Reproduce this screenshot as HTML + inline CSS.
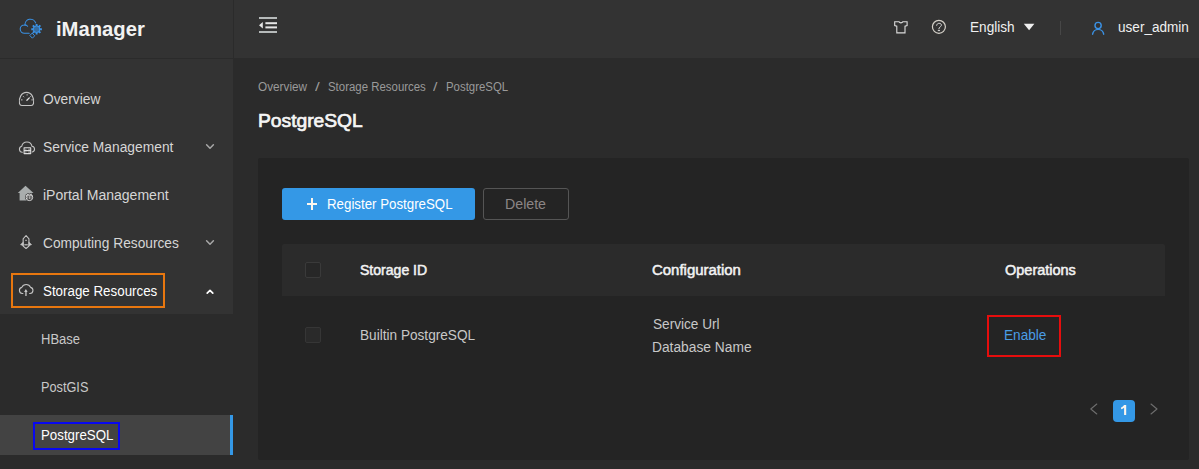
<!DOCTYPE html>
<html><head><meta charset="utf-8">
<style>
*{box-sizing:border-box;margin:0;padding:0}
html,body{width:1199px;height:469px;overflow:hidden;background:#2b2b2b;font-family:"Liberation Sans",sans-serif}
.a{position:absolute}
.t{position:absolute;white-space:nowrap;line-height:1;transform-origin:0 0;font-family:"Liberation Sans",sans-serif}
svg{position:absolute;overflow:visible}
</style></head><body>
<!-- sidebar + header -->
<div class="a" style="left:0;top:0;width:233px;height:469px;background:#333333"></div>
<div class="a" style="left:234px;top:0;width:965px;height:58px;background:#333333"></div>
<div class="a" style="left:0;top:58px;width:233px;height:1px;background:#2b2b2b"></div>
<div class="a" style="left:0;top:314px;width:233px;height:155px;background:#2b2b2b"></div>
<div class="a" style="left:0;top:415px;width:233px;height:40px;background:#434343"></div>
<div class="a" style="left:230px;top:415px;width:3px;height:40px;background:#3498e6"></div>
<div class="a" style="left:11px;top:273px;width:154px;height:35px;border:2px solid #e8770f"></div>
<div class="a" style="left:33px;top:422px;width:87px;height:28px;border:2px solid #0808f0"></div>

<!-- logo icon -->
<svg style="left:0;top:0" width="60" height="58" viewBox="0 0 60 58" fill="none" stroke="#3a92e6" stroke-width="1.05" stroke-linecap="round" stroke-linejoin="round">
<path d="M29.2 33.3H24.4a4.200 4.200 0 0 1 0-8.400c1.400-.1 2.500.4 3.200 1.400"/>
<path d="M25.050 25.400A5.500 5.500 0 0 1 35.700 22.900"/>
<circle cx="36.600" cy="29.200" r="3.500" fill="#3a92e6" fill-opacity=".6" stroke="none"/>
<path d="M36.600 23.900v2.200M36.600 32.300v2.200M31.300 29.200h2.200M39.700 29.200h2.200M32.850 25.450l1.550 1.550M38.800 31.400l1.550 1.550M32.850 32.950l1.550-1.550M38.800 27l1.550-1.550" stroke-width="1.900" stroke-linecap="butt"/>
<circle cx="36.600" cy="29.200" r="3.300" stroke-width="1" />
<path d="M32.400 33.400l2.300 2.400-2.300 2.400-2.300-2.400z" stroke-width="1"/>
</svg>

<!-- menu icons -->
<svg style="left:0;top:0" width="60" height="300" viewBox="0 0 60 300" fill="none" stroke="#c4c4c4" stroke-width="1.1" stroke-linecap="round" stroke-linejoin="round">
<!-- overview gauge -->
<path d="M21.800 105.500H31.200Q33 105.500 33.500 103.500C34.600 98 31.500 92.400 26.500 92.400C21.500 92.400 18.400 98 19.500 103.500Q20 105.500 21.800 105.500Z"/>
<path d="M26.900 100.300L29.300 97.900" stroke="#e0e0e0" stroke-width="1.300"/>
<path d="M27.100 94.600v.5M23.400 96.500l.4.400M30.700 96.500l-.4.400M21.400 99.900h.7M31.800 99.900h.7" stroke-width="1"/>
<!-- service: cloud + server -->
<path d="M22.300 152.300a3.100 3.100 0 0 1-.5-6.100A5.200 5.200 0 0 1 32 146.300a2.900 2.900 0 0 1 .3 5.700"/>
<path d="M24.100 147.700h6.600v5.900h-6.600zM24.100 150.600h6.600" stroke="#dcdcdc" stroke-width="1.100"/>
<path d="M25.800 149.200h.1M25.800 152.100h.1M28.800 149.200h.6M28.800 152.100h.6" stroke="#dcdcdc" stroke-width=".9"/>
<!-- rocket -->
<path d="M26.050 235.500L28.950 238.800V246.100L26.050 248.500L23.150 246.100V238.800Z"/>
<path d="M23.100 242.300L20.500 244.600L23.100 245.700ZM29 242.300L31.600 244.600L29 245.700Z" fill="#c4c4c4" stroke-width=".6"/>
<rect x="24.300" y="244.200" width="3.500" height="1.200" fill="#c4c4c4" stroke="none"/>
<path d="M25.600 240.300h.9" stroke-width="1"/>
<!-- storage: cloud upload -->
<path d="M22.900 293.500h-.6a3.100 3.100 0 0 1-.5-6.100A4.800 4.800 0 0 1 30.600 287.400a3.100 3.100 0 0 1-.5 6.100h-.5" stroke="#c4c4c4"/>
<path d="M25.900 289.100l1.700 2.800h-3.400z" fill="#d4d4d4" stroke="none"/>
<rect x="25.200" y="291.500" width="1.500" height="4.500" fill="#b4b4b4" stroke="none"/>
</svg>
<!-- iportal house (filled) -->
<svg style="left:0;top:0" width="60" height="300" viewBox="0 0 60 300">
<path d="M25.500 185.700l8 7.300h-1.800v7.600H19.600v-7.600h-1.800z" fill="#a9adad"/>
<circle cx="29.400" cy="197.300" r="4.300" fill="#333333"/>
<circle cx="29.400" cy="197.300" r="3.300" fill="none" stroke="#d8d8d8" stroke-width="1"/>
<path d="M26.600 195.600h5.600M27.800 196.200v2.600M29.400 196.200v3M31 196.200v2.600" stroke="#d8d8d8" stroke-width=".8" fill="none"/>
</svg>
<!-- chevrons -->
<svg style="left:0;top:0" width="233" height="300" viewBox="0 0 233 300" fill="none" stroke-linecap="round" stroke-linejoin="round">
<path d="M206.600 144.800l3.400 3.400 3.400-3.400" stroke="#a8a8a8" stroke-width="1.500"/>
<path d="M206.600 240.800l3.400 3.400 3.400-3.400" stroke="#a8a8a8" stroke-width="1.500"/>
<path d="M207.200 293.200l2.800-2.800 2.800 2.800" stroke="#ffffff" stroke-width="1.700"/>
</svg>

<!-- header icons -->
<svg style="left:234px;top:0" width="965" height="58" viewBox="234 0 965 58" fill="none" stroke-linecap="round" stroke-linejoin="round">
<rect x="259" y="17" width="18" height="2" fill="#b6baba"/>
<rect x="259" y="31" width="18" height="2" fill="#b6baba"/>
<rect x="265.400" y="22.200" width="11.600" height="2" fill="#e6e6e6"/>
<rect x="265.400" y="26.400" width="11.600" height="2" fill="#e6e6e6"/>
<path d="M259 25.200l3.800-3.200v6.400z" fill="#e6e6e6"/>
<!-- shirt -->
<path d="M894.700 21.800h4.300c.600 1.400 3.200 1.400 3.800 0h4.300v3.800l-2.100.500v6.800h-8.200v-6.800l-2.100-.500z" stroke="#dcdcdc" stroke-width="1.100" stroke-linejoin="miter"/>
<!-- help -->
<circle cx="938.900" cy="26.800" r="6.500" stroke="#d4d0c8" stroke-width="1.200"/>
<path d="M936.700 25.300c.300-1.500 1.300-2 2.400-2 1.300 0 2.300.700 2.300 1.800 0 1-.900 1.500-1.600 2.100-.600.500-.900.900-.900 1.700" stroke="#dcdcdc" stroke-width="1"/>
<path d="M938.200 30.600h1.400" stroke="#dcdcdc" stroke-width="1"/>
<!-- caret -->
<path d="M1023.800 23.800h10.600l-5.300 6.400z" fill="#f0f0f0"/>
<!-- divider -->
<rect x="1060" y="21" width="1" height="14" fill="#474747"/>
<!-- user -->
<circle cx="1098.100" cy="25.500" r="3.100" stroke="#3a92e6" stroke-width="1.400"/>
<path d="M1092.600 34.200a5.600 5.600 0 0 1 11.100 0" stroke="#3a92e6" stroke-width="1.400"/>
</svg>

<!-- card -->
<div class="a" style="left:258px;top:158px;width:931px;height:302px;background:#242424;border-radius:2px"></div>
<div class="a" style="left:282px;top:188px;width:193px;height:32px;background:#3498e6;border-radius:3px"></div>
<div class="a" style="left:307px;top:203px;width:10px;height:2px;background:#fbf6ee"></div>
<div class="a" style="left:311px;top:198px;width:2px;height:12px;background:#fbf6ee"></div>
<div class="a" style="left:483px;top:188px;width:86px;height:32px;border:1px solid #555;border-radius:3px"></div>
<div class="a" style="left:282px;top:244px;width:883px;height:52px;background:#2b2b2b;border-radius:2px 2px 0 0"></div>
<div class="a" style="left:305px;top:262px;width:16px;height:16px;background:#272727;border:1px solid #3a3a3a;border-radius:2px"></div>
<div class="a" style="left:305px;top:327px;width:16px;height:16px;background:#2a2a2a;border:1px solid #363636;border-radius:2px"></div>
<div class="a" style="left:987px;top:315px;width:74px;height:42px;border:2px solid #e60d0d"></div>
<div class="a" style="left:1113px;top:400px;width:22px;height:22px;background:#3498e6;border-radius:4px"></div>
<svg style="left:1080px;top:395px" width="90" height="30" viewBox="1080 395 90 30" fill="none" stroke="#6e6e6e" stroke-width="1.100" stroke-linecap="round" stroke-linejoin="round">
<path d="M1096.800 404l-6 5 6 5"/><path d="M1151 404l6 5-6 5"/><path d="M1124.100 405h2.100v10h-2.100v-7.300c-.900.800-1.900 1.300-3 1.600v-1.800c1.300-.500 2.300-1.400 3-2.500z" fill="#fbf6ee" stroke="none"/>
</svg>

<div class="t" style="left:55.74px;top:19.07px;font-size:20px;font-weight:bold;color:#f2f2f2;transform:scaleX(1.011);">iManager</div>
<div class="t" style="left:43.26px;top:92.15px;font-size:14px;font-weight:normal;color:#d6d6d6;transform:scaleX(0.9843);">Overview</div>
<div class="t" style="left:43.26px;top:140.15px;font-size:14px;font-weight:normal;color:#d6d6d6;transform:scaleX(0.9856);">Service Management</div>
<div class="t" style="left:43.4px;top:188.15px;font-size:14px;font-weight:normal;color:#d6d6d6;transform:scaleX(1.0028);">iPortal Management</div>
<div class="t" style="left:43.26px;top:236.15px;font-size:14px;font-weight:normal;color:#d6d6d6;transform:scaleX(0.9807);">Computing Resources</div>
<div class="t" style="left:43.28px;top:284.15px;font-size:14px;font-weight:normal;color:#ffffff;transform:scaleX(0.9536);">Storage Resources</div>
<div class="t" style="left:41.47px;top:332.15px;font-size:14px;font-weight:normal;color:#c8c8c8;transform:scaleX(0.9284);">HBase</div>
<div class="t" style="left:41.49px;top:380.15px;font-size:14px;font-weight:normal;color:#c8c8c8;transform:scaleX(0.9089);">PostGIS</div>
<div class="t" style="left:41.45px;top:428.15px;font-size:14px;font-weight:normal;color:#ffffff;transform:scaleX(0.9498);">PostgreSQL</div>
<div class="t" style="left:969.83px;top:20.15px;font-size:14px;font-weight:normal;color:#f0f0f0;transform:scaleX(0.9727);">English</div>
<div class="t" style="left:1118.47px;top:20.15px;font-size:14px;font-weight:normal;color:#f0f0f0;transform:scaleX(0.9692);">user_admin</div>
<div class="t" style="left:257.71px;top:81.34px;font-size:12px;font-weight:normal;color:#9a9a9a;transform:scaleX(0.9818);">Overview</div>
<div class="t" style="left:315.4px;top:81.34px;font-size:12px;font-weight:normal;color:#9a9a9a;transform:scaleX(1.4154);">/</div>
<div class="t" style="left:327.82px;top:81.34px;font-size:12px;font-weight:normal;color:#9a9a9a;transform:scaleX(0.9523);">Storage Resources</div>
<div class="t" style="left:433.4px;top:81.34px;font-size:12px;font-weight:normal;color:#9a9a9a;transform:scaleX(1.3231);">/</div>
<div class="t" style="left:446.45px;top:81.34px;font-size:12px;font-weight:normal;color:#9a9a9a;transform:scaleX(0.95);">PostgreSQL</div>
<div class="t" style="left:257.6px;top:112.04px;font-size:18.5px;font-weight:normal;color:#f5f5f5;transform:scaleX(1.0398);-webkit-text-stroke:0.7px #f5f5f5;">PostgreSQL</div>
<div class="t" style="left:326.95px;top:197.35px;font-size:14px;font-weight:normal;color:#ffffff;transform:scaleX(0.9491);">Register PostgreSQL</div>
<div class="t" style="left:505.19px;top:197.35px;font-size:14px;font-weight:normal;color:#8c8686;transform:scaleX(1.0128);">Delete</div>
<div class="t" style="left:359.85px;top:263.35px;font-size:14px;font-weight:normal;color:#f2f2f2;transform:scaleX(1.0038);-webkit-text-stroke:0.5px #f2f2f2;">Storage ID</div>
<div class="t" style="left:651.67px;top:263.35px;font-size:14px;font-weight:normal;color:#f2f2f2;transform:scaleX(1.0675);-webkit-text-stroke:0.5px #f2f2f2;">Configuration</div>
<div class="t" style="left:1004.68px;top:263.35px;font-size:14px;font-weight:normal;color:#f2f2f2;transform:scaleX(1.0347);-webkit-text-stroke:0.5px #f2f2f2;">Operations</div>
<div class="t" style="left:359.73px;top:328.45px;font-size:14px;font-weight:normal;color:#c8c8c8;transform:scaleX(0.973);">Builtin PostgreSQL</div>
<div class="t" style="left:652.57px;top:317.15px;font-size:14px;font-weight:normal;color:#c8c8c8;transform:scaleX(0.9723);">Service Url</div>
<div class="t" style="left:652.32px;top:340.35px;font-size:14px;font-weight:normal;color:#c8c8c8;transform:scaleX(0.9839);">Database Name</div>
<div class="t" style="left:1004.23px;top:328.45px;font-size:14px;font-weight:normal;color:#4a9de6;transform:scaleX(0.9714);">Enable</div>
</body></html>
